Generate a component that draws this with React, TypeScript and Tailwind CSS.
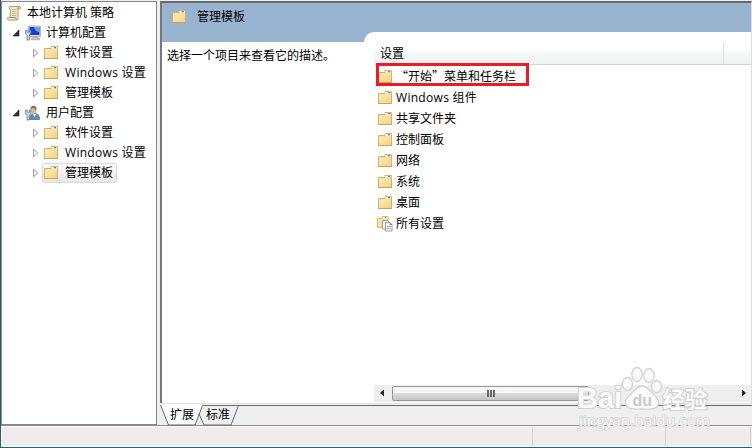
import type { ReactNode } from 'react';

function FolderShape() {
  return (
    <>
      <path d="M1.500 3.500h6.500v-2h6.500v12h-13Z" fill="#f0d596" stroke="#d2b36c" />
      <path d="M8.500 2h5.500v1.500H8.500z" fill="#fff" />
      <path d="M11 2h2v1.200h-2z" fill="#3f8ad6" />
      <path d="M2 4.500h6.500l1-.5H14v9H2Z" fill="url(#folderFace)" />
      <path d="M1 13.500h14" stroke="#c9a557" />
    </>
  );
}

function FolderIcon() {
  return (
    <svg className="size-4 shrink-0" viewBox="0 0 16 16">
      <FolderShape />
    </svg>
  );
}

function AllSettingsIcon() {
  return (
    <svg className="size-4 shrink-0 overflow-visible" viewBox="0 0 16 16">
      <path d="M.5 2.500h4.500v-2h6v11H.5Z" fill="url(#folderFace)" stroke="#dabb74" />
      <path d="M6 1h4.400v1.500H6z" fill="#fff" />
      <path d="M8 1h1.500v1H8z" fill="#4a8fd0" />
      <path d="M5.500 4.500h5l1 1v7.500h-6z" fill="#fff" stroke="#888" strokeWidth=".8" />
      <path d="M8.500 6.500h4.500l2 2v6.500h-6.500z" fill="#fff" stroke="#888" strokeWidth=".8" />
      <path d="M13 6.500v2h2M10 10.500h1.500M12.300 10.500h1.500M10 12.800h1.500M12.300 12.800h1.500" fill="none" stroke="#777" strokeWidth=".9" />
    </svg>
  );
}

function ScrollIcon() {
  return (
    <svg className="size-4 shrink-0" viewBox="0 0 16 16">
      <path d="M4 1.500h9.500c1.400 0 1.600 2.500 0 2.500H12v9.500c0 .8-.5 1.500-1.300 1.500H2.500C.8 15 .8 12.500 2.300 12.500H4.200V3.800C2.700 3.600 2.700 1.600 4 1.500Z" fill="#f5eccb" stroke="#a58e61" strokeWidth=".9" />
      <path d="M12 4V2.800c0-.8.500-1.200 1.200-1.300M4.200 12.500h5.300c.7 0 .5 2.300 1.500 2.300" fill="none" stroke="#8d7447" strokeWidth=".9" />
      <path d="M6 4.500h4.300M6 6.500h4.300M6 8.500h4.300M6 10.500h4.300" stroke="#b9aa82" strokeWidth=".8" />
    </svg>
  );
}

function Wrench() {
  return (
    <path d="M.6 5.500v3l1.500 1.300V15h2.300V9.800L5.800 8.500v-3L4.500 4.800v2.400H2.100V4.800Z" fill="#d3e1ec" stroke="#587590" strokeWidth=".8" />
  );
}

function ComputerIcon() {
  return (
    <svg className="size-4 shrink-0" viewBox="0 0 16 16">
      <path d="M3.500 1h12v10.500h-12z" fill="#e2e2de" stroke="#a3a39e" strokeWidth=".8" />
      <path d="M4.500 2h10v8h-10z" fill="#1a3fd0" />
      <path d="M9 2h5.500v5C12 7 9.500 5.500 9 2Z" fill="#6f9bf7" />
      <path d="M8 11.700h4v1.300h2.500v1.800H6.500V13H8z" fill="#c8c8c3" stroke="#8d8d88" strokeWidth=".5" />
      <Wrench />
    </svg>
  );
}

function UserIcon() {
  return (
    <svg className="size-4 shrink-0" viewBox="0 0 16 16">
      <path d="M4.500 14.500c0-4 1.500-6 5-6s5 2 5 6Z" fill="#5f8fb9" stroke="#3f6a92" strokeWidth=".7" />
      <path d="m8 9 1.500 3 1.600-3Z" fill="#fff" />
      <ellipse cx="8.500" cy="5" rx="2.800" ry="3.700" fill="#dfb58f" />
      <path d="M5.600 4.800C5 1.800 6.800.7 8.600.7c2.300 0 3.500 1.600 2.800 4.400l-.7 1C10.600 4 9.500 3 7.500 3Z" fill="#8a6f5c" />
      <Wrench />
    </svg>
  );
}

type NodeProps = { label: string; icon: ReactNode; open?: boolean; child?: boolean; selected?: boolean };

const tree: NodeProps[] = [
  { label: '计算机配置', icon: <ComputerIcon />, open: true },
  { label: '软件设置', icon: <FolderIcon />, child: true },
  { label: 'Windows 设置', icon: <FolderIcon />, child: true },
  { label: '管理模板', icon: <FolderIcon />, child: true },
  { label: '用户配置', icon: <UserIcon />, open: true },
  { label: '软件设置', icon: <FolderIcon />, child: true },
  { label: 'Windows 设置', icon: <FolderIcon />, child: true },
  { label: '管理模板', icon: <FolderIcon />, child: true, selected: true }
];

function Label({ text }: { text: string }) {
  return <span className={text.startsWith('Windows') ? 'tracking-[0.3px]' : ''}>{text}</span>;
}

function TreeNode({ label, icon, open, child, selected }: NodeProps) {
  return (
    <div className={child ? 'flex h-5 items-center pl-[30px]' : 'flex h-5 items-center pl-[10px]'}>
      <svg className="h-2.5 w-2 shrink-0" viewBox="0 0 8 10">
        {open ? <path d="M7 2v6H1Z" fill="#333" stroke="#222" strokeWidth=".6" /> : <path d="M1.500 1.200v7.600L5.700 5Z" fill="#fff" stroke="#999" />}
      </svg>
      <div className={selected ? 'ml-[2px] flex h-5 items-center rounded-[3px] border border-[#d9d9d9] bg-linear-to-b from-[#fafafa] to-[#e8e8e8] pr-[3px]' : child ? 'ml-[3px] flex items-center' : 'ml-[5px] flex items-center'}>
        {icon}
        <span className={child ? 'ml-[6px]' : 'ml-[5px]'}>
          <Label text={label} />
        </span>
      </div>
    </div>
  );
}

const settings = ['“开始”菜单和任务栏', 'Windows 组件', '共享文件夹', '控制面板', '网络', '系统', '桌面', '所有设置'];

function Watermark() {
  return (
    <svg className="pointer-events-none absolute top-[362px] left-[572px] h-[70px] w-[142px]" viewBox="0 0 142 70">
      <g fill="#fbfbfb" stroke="#d2d2d2" strokeWidth="1.300">
        <ellipse cx="54.500" cy="22" rx="5" ry="6.500" />
        <ellipse cx="64" cy="12.500" rx="5.200" ry="7" />
        <ellipse cx="76" cy="13.500" rx="5.200" ry="7" />
        <ellipse cx="83.500" cy="24.500" rx="5" ry="6" />
        <path d="M69 24c5 0 7 4 11 8 4 3 7 6 5 11s-8 4-16 4-14 1-16-4 1-8 5-11c4-4 6-8 11-8Z" />
      </g>
      <g fontFamily="Liberation Sans, sans-serif" fontWeight="700" fill="#fafafa" stroke="#d2d2d2" strokeWidth="2" paintOrder="stroke">
        <text x="4" y="46" fontSize="30" textLength="45" lengthAdjust="spacingAndGlyphs">Bai</text>
        <text x="59.500" y="44" fontSize="16" fill="#cacaca" stroke="none">du</text>
        <text x="89.500" y="46" fontSize="22.500" fontFamily="Noto Sans CJK SC, sans-serif">经验</text>
      </g>
      <text x="6" y="64" fontSize="14.500" textLength="131" lengthAdjust="spacingAndGlyphs" fontFamily="Open Sans, sans-serif" fill="#f8f8f8" stroke="#d4d4d4" strokeWidth="1.500" paintOrder="stroke">
        jingyan.baidu.com
      </text>
    </svg>
  );
}

export default function App() {
  return (
    <div className="relative flex h-[448px] w-[752px] flex-col overflow-hidden border-b border-l border-[#246078] bg-[#efefef] font-['Open_Sans','Noto_Sans_CJK_SC',sans-serif] text-xs whitespace-nowrap text-black">
      <svg className="absolute size-0">
        <defs>
          <linearGradient id="folderFace" x1="0" y1="0" x2="1" y2="1">
            <stop offset="0" stopColor="#fdedc0" />
            <stop offset="1" stopColor="#f5d27c" />
          </linearGradient>
        </defs>
      </svg>

      <div className="flex h-[426px] shrink-0 gap-[3px] border-b border-[#8b8d93] pt-px">
        <aside className="w-[156px] shrink-0 border border-[#828790] bg-white pt-px">
          <div className="flex h-5 items-center pl-[4px]">
            <ScrollIcon />
            <span className="ml-[5px]">本地计算机 策略</span>
          </div>
          {tree.map((node, i) => (
            <TreeNode key={i} {...node} />
          ))}
        </aside>

        <main className="flex min-w-0 flex-1 flex-col">
          <div className="flex h-[402px] shrink-0 flex-col border-t-2 border-r border-l-2 border-t-[#696969] border-r-[#dfdfdf] border-l-[#777] bg-white">
            <div className="flex h-[39px] shrink-0 bg-[#99b4d1]">
              <div className="flex h-[27px] w-[202px] items-center pl-[9px]">
                <FolderIcon />
                <span className="ml-[10px] pt-px">管理模板</span>
              </div>
              <div className="mt-[29px] flex-1 rounded-tl-[10px] bg-white" />
            </div>

            <div className="flex min-h-0 flex-1">
              <div className="w-[212px] shrink-0 pt-[6px] pl-[5px]">选择一个项目来查看它的描述。</div>
              <div className="flex min-w-0 flex-1 flex-col">
                <div className="flex h-[23px] shrink-0 border-b border-[#d5d5d5] bg-linear-to-b from-white from-40% via-[#f7f8fa] via-45% to-[#f1f2f4]">
                  <div className="w-[350px] border-r border-[#dedfe1] pt-[4px] pl-[6px]">设置</div>
                </div>
                <ul className="pt-px">
                  {settings.map((name, i) => (
                    <li key={name} className="flex h-[21px] items-center pl-[3px]">
                      {i === 7 ? <AllSettingsIcon /> : <FolderIcon />}
                      <span className={i === 0 ? "ml-[3px] pb-px font-['Noto_Sans_CJK_SC',sans-serif]" : 'ml-[3px]'}>
                        <Label text={name} />
                      </span>
                    </li>
                  ))}
                </ul>
                <div className="mt-auto mb-px flex h-[17px] shrink-0 items-center bg-[#eeeeee]">
                  <svg className="h-[17px] w-[18px]" viewBox="0 0 18 17">
                    <path d="M10 4.500v7L6 8Z" fill="#222" />
                  </svg>
                  <div className="flex h-[15px] w-[197px] items-center justify-center gap-px rounded-[2px] border border-[#999] bg-linear-to-b from-[#f6f6f6] from-45% via-[#dcdcdc] via-50% to-[#c4c4c8]">
                    <i className="h-[7px] w-0.5 bg-[#666]" />
                    <i className="h-[7px] w-0.5 bg-[#666]" />
                    <i className="h-[7px] w-0.5 bg-[#666]" />
                  </div>
                  <svg className="ml-auto h-[17px] w-[14px]" viewBox="0 0 14 17">
                    <path d="M5 4.500v7L9 8Z" fill="#222" />
                  </svg>
                </div>
              </div>
            </div>
          </div>

          <div className="relative h-[22px] border-t border-[#e3e3e3]">
            <svg className="absolute inset-0 h-[22px] w-[592px]" viewBox="0 0 592 22">
              <path d="M0 0h43l-8 20.500H8Z" fill="#fff" />
              <path d="M43 1.500h549" stroke="#696969" />
              <path d="m.5 1 8 20H35l7.500-19.500M78.500 1.500 71 21H44L39 10" fill="none" stroke="#696969" />
            </svg>
            <div className="relative flex pt-[3px] pl-[10px]">
              <span>扩展</span>
              <span className="ml-3">标准</span>
            </div>
          </div>
        </main>
      </div>

      <footer className="flex flex-1 border-y border-l border-white bg-[#f0eceb]">
        <div className="w-[531px] border-r border-[#d5d2d1]" />
        <div className="w-[133px] border-r border-[#d5d2d1]" />
        <div className="w-[85px] border-r border-[#d5d2d1]" />
      </footer>

      <div className="absolute top-[63px] left-[375px] h-[23px] w-[153px] border-3 border-[#ed1c24]" />
      <Watermark />
    </div>
  );
}
